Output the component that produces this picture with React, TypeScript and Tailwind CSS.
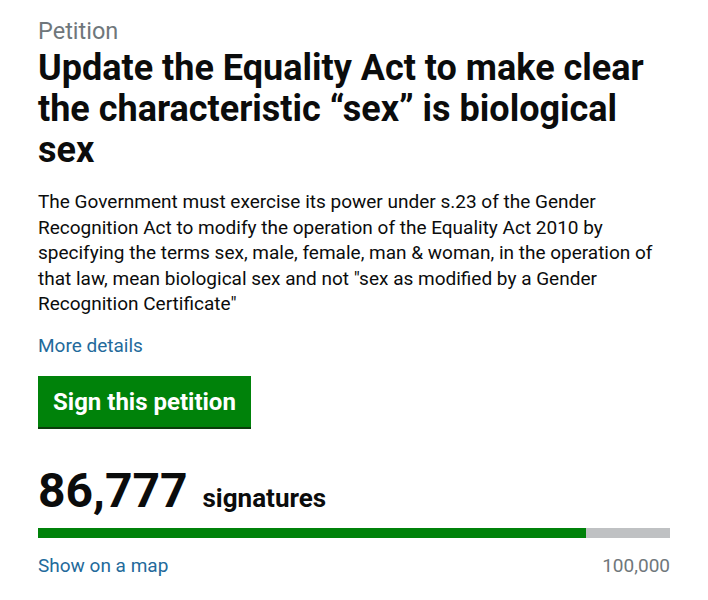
export default function App() {
  const pct = (86777 / 100000) * 100;
  return (
    <div className="bg-white w-[708px] h-[600px] px-[38px] pt-[15px] text-[#0b0c0c]" style={{ fontFamily: "Roboto, 'Noto Sans', sans-serif" }}>
      <div className="text-[23.5px] leading-[32px] text-[#6f777b]">Petition</div>
      <h1 className="mt-[1px] text-[36px] leading-[41px] font-bold">
        Update the Equality Act to make clear the characteristic “sex” is biological sex
      </h1>
      <p className="mt-[18px] text-[19px] leading-[25.5px]">
        The Government must exercise its power under s.23 of the Gender Recognition Act to modify the operation of the Equality Act 2010 by specifying the terms sex, male, female, man &amp; woman, in the operation of that law, mean biological sex and not "sex as modified by a Gender Recognition Certificate"
      </p>
      <div className="mt-[16px] text-[19px] leading-[25px] text-[#236a9b]">More details</div>
      <button className="mt-[18px] block bg-[#00820a] text-white font-bold text-[24px] leading-[30px] px-[15px] pt-[11px] pb-[10px] shadow-[0_2px_0_#0b3d0b]">
        Sign this petition
      </button>
      <div className="mt-[38px] flex items-baseline gap-[15px]">
        <span className="text-[48px] leading-[52px] font-bold">86,777</span>
        <span className="text-[26px] font-bold">signatures</span>
      </div>
      <div className="mt-[10px] h-[10px] bg-[#bfc1c3]">
        <div className="h-full bg-[#00820a]" style={{ width: `${pct}%` }} />
      </div>
      <div className="mt-[15px] flex justify-between text-[19px] leading-[25px]">
        <span className="text-[#236a9b]">Show on a map</span>
        <span className="text-[#6f777b]">100,000</span>
      </div>
    </div>
  );
}
